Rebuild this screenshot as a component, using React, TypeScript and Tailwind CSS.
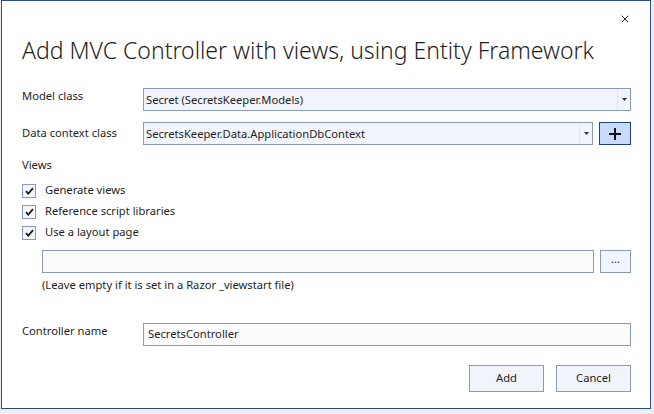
import { X } from 'lucide-react'

const font = { fontFamily: '"Segoe UI", "Noto Sans", Arial, sans-serif' }

function Caret() {
    return (
        <svg width="5" height="3" viewBox="0 0 5 3" className="block">
            <path d="M0 0h5L2.5 3z" fill="#333" />
        </svg>
    )
}

function Dropdown({ value, className }: { value: string; className: string }) {
    return (
        <div className={`flex h-[23px] items-stretch border border-[#8a9bb5] bg-[#f1f4fb] ${className}`}>
            <div className="flex flex-1 items-center pl-[2px] text-[11.2px] leading-none text-[#1e1e1e]">{value}</div>
            <div className="flex w-[13px] items-center justify-center border-l border-[#e3e7ef]">
                <Caret />
            </div>
        </div>
    )
}

function Check({ label }: { label: string }) {
    return (
        <div className="flex h-[21px] items-center gap-[9px]">
            <div className="flex h-[14px] w-[14px] items-center justify-center border border-[#8a9bb5] bg-[#f3f5fa]">
                <svg width="9" height="8" viewBox="0 0 9 8">
                    <path d="M1 4.2l2.3 2.4L8 1.2" stroke="#1e1e1e" strokeWidth="1.8" fill="none" />
                </svg>
            </div>
            <span className="text-[11.2px] text-[#1e1e1e]">{label}</span>
        </div>
    )
}

export default function App() {
    return (
        <div className="h-[414px] w-[654px] overflow-hidden bg-[#eeeef2]" style={font}>
            <div className="ml-[1px] flex h-[409px] w-[650px] flex-col border border-[#2b4a8a] bg-white pl-[20px] pr-[19px]">
                <div className="flex justify-end pt-[12px]">
                    <X className="h-[12px] w-[12px] text-[#1e1e1e]" strokeWidth={2} />
                </div>
                <h1 className="mt-[10px] text-[23px] font-light leading-[30px] text-[#1e1e1e]">
                    Add MVC Controller with views, using Entity Framework
                </h1>

                <div className="mt-[23px] flex items-start">
                    <span className="w-[121px] text-[11.2px] leading-[16px] text-[#1e1e1e]">Model class</span>
                    <Dropdown value="Secret (SecretsKeeper.Models)" className="flex-1" />
                </div>

                <div className="mt-[11px] flex items-start">
                    <span className="w-[121px] pt-[3px] text-[11.2px] leading-[16px] text-[#1e1e1e]">Data context class</span>
                    <Dropdown value="SecretsKeeper.Data.ApplicationDbContext" className="flex-1" />
                    <div className="ml-[6px] flex h-[23px] w-[32px] items-center justify-center border border-[#1e3f8a] bg-[#c9dafc]">
                        <svg width="12" height="12" viewBox="0 0 12 12">
                            <path d="M6 0v12M0 6h12" stroke="#111" strokeWidth="2" />
                        </svg>
                    </div>
                </div>

                <div className="mt-[12px] text-[11.2px] leading-[16px] text-[#1e1e1e]">Views</div>

                <div className="mt-[7px] flex flex-col">
                    <Check label="Generate views" />
                    <Check label="Reference script libraries" />
                    <Check label="Use a layout page" />
                </div>

                <div className="ml-[20px] mt-[7px] flex">
                    <div className="h-[23px] flex-1 border border-[#8a9bb5] bg-[#fbfbfb]" />
                    <div className="ml-[6px] flex h-[23px] w-[31px] items-center justify-center border border-[#8a9bb5] bg-[#f1f4fb] pb-[4px] text-[11.2px] text-[#1e1e1e]">
                        ...
                    </div>
                </div>
                <div className="ml-[20px] mt-[4px] text-[11.2px] leading-[16px] text-[#1e1e1e]">
                    (Leave empty if it is set in a Razor _viewstart file)
                </div>

                <div className="mt-[30px] flex items-start">
                    <span className="w-[121px] text-[11.2px] leading-[16px] text-[#1e1e1e]">Controller name</span>
                    <div className="flex h-[23px] flex-1 items-center border border-[#8a9bb5] bg-[#fbfbfb] pl-[4px] text-[11.2px] text-[#1e1e1e]">
                        SecretsController
                    </div>
                </div>

                <div className="mt-[19px] flex justify-end gap-[12px]">
                    <button className="h-[27px] w-[75px] border border-[#8a9bb5] bg-[#f1f4fb] text-[11.2px] text-[#1e1e1e]">Add</button>
                    <button className="h-[27px] w-[75px] border border-[#8a9bb5] bg-[#f1f4fb] text-[11.2px] text-[#1e1e1e]">Cancel</button>
                </div>
            </div>
        </div>
    )
}
